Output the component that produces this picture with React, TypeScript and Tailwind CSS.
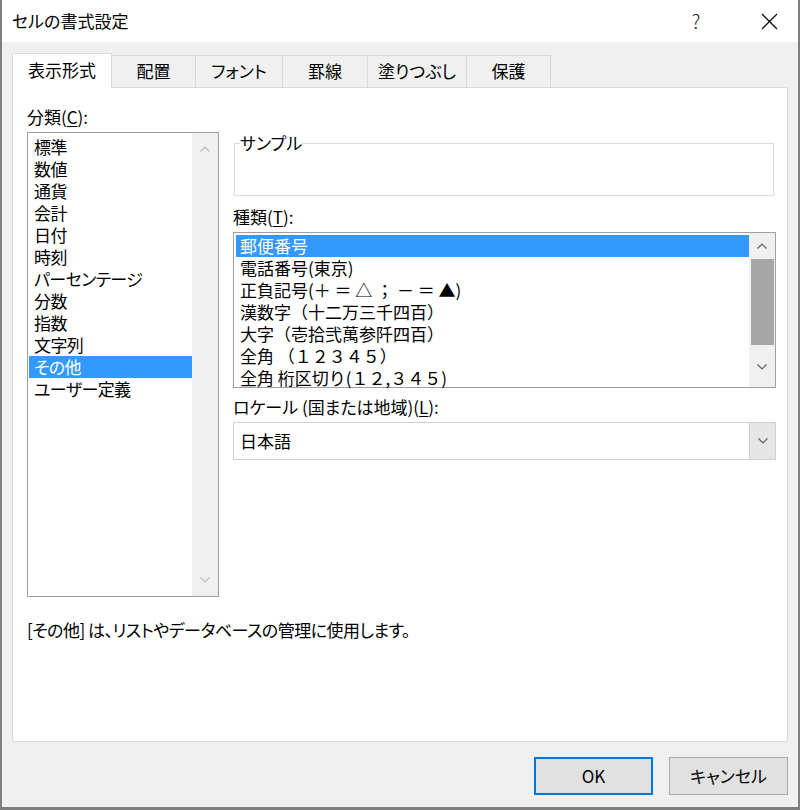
import React from "react";

const Up = ({ color }: { color: string }) => (
  <svg width="10" height="6" viewBox="0 0 10 6" fill="none">
    <polyline points="0.5,5.5 5,1 9.5,5.5" stroke={color} strokeWidth="1.2" />
  </svg>
);
const Down = ({ color }: { color: string }) => (
  <svg width="10" height="6" viewBox="0 0 10 6" fill="none">
    <polyline points="0.5,0.5 5,5 9.5,0.5" stroke={color} strokeWidth="1.2" />
  </svg>
);

const categories = [
  "標準",
  "数値",
  "通貨",
  "会計",
  "日付",
  "時刻",
  "パーセンテージ",
  "分数",
  "指数",
  "文字列",
  "その他",
  "ユーザー定義",
];

const types = [
  "郵便番号",
  "電話番号(東京)",
  "正負記号(＋ ＝ △ ； － ＝ ▲)",
  "漢数字（十二万三千四百）",
  "大字（壱拾弐萬参阡四百）",
  "全角 （１２３４５）",
  "全角 桁区切り(１２,３４５)",
];

const tabs = [
  { label: "配置", w: "w-[84px]" },
  { label: "フォント", w: "w-[87px]" },
  { label: "罫線", w: "w-[85px]" },
  { label: "塗りつぶし", w: "w-[99px]" },
  { label: "保護", w: "w-[84px]" },
];

export default function App() {
  return (
    <div className="w-[800px] h-[810px] bg-[#5a5a5a] font-['Noto_Sans_CJK_JP',sans-serif] text-[17px] leading-[22px] text-black [font-feature-settings:'palt']">
      <div className="w-[800px] h-[810px] flex flex-col border-x-2 border-b-[3px] border-[#7e7e7e] bg-[#f0f0f0]">
        {/* title bar */}
        <div className="h-[42px] bg-white flex items-center pl-[10px] shrink-0">
          <div className="text-[17px]">セルの書式設定</div>
          <div className="ml-auto w-[30px] text-center text-[19px] font-light mr-[50px] text-[#111]">?</div>
          <div className="mr-[20px] flex items-center">
            <svg width="17" height="17" viewBox="0 0 17 17">
              <line x1="1" y1="1" x2="16" y2="16" stroke="#111" strokeWidth="1.3" />
              <line x1="16" y1="1" x2="1" y2="16" stroke="#111" strokeWidth="1.3" />
            </svg>
          </div>
        </div>

        {/* body */}
        <div className="flex-1 flex flex-col pt-[11px] pl-[10px] pr-[10px]">
          {/* tabs */}
          <div className="flex items-end h-[34px]">
            <div className="relative z-10 w-[100px] h-[35px] mb-[-1px] bg-white border-x border-t border-[#d9d9d9] flex items-center justify-center pb-[3px]">
              表示形式
            </div>
            {tabs.map((t) => (
              <div
                key={t.label}
                className={`${t.w} h-[32px] bg-[#f0f0f0] border-t border-r border-[#d9d9d9] flex items-center justify-center pb-[1px]`}
              >
                {t.label}
              </div>
            ))}
          </div>

          {/* panel */}
          <div className="h-[655px] bg-white border border-[#d9d9d9] pt-[18px] pl-[14px] flex flex-col">
            <div className="flex">
              {/* left column */}
              <div className="w-[192px] flex flex-col">
                <div className="h-[22px]">
                  分類(<span className="underline underline-offset-2">C</span>):
                </div>
                <div className="mt-[4px] h-[465px] border border-[#a0a0a0] flex">
                  <div className="flex-1 pt-[3px] pl-[1px]">
                    {categories.map((c) => (
                      <div
                        key={c}
                        className={`h-[22px] pl-[5px] tracking-[-0.6px] ${c === "その他" ? "bg-[#3399ff] text-white" : ""}`}
                      >
                        {c}
                      </div>
                    ))}
                  </div>
                  <div className="w-[26px] bg-[#f0f0f0] flex flex-col items-center justify-between pt-[13px] pb-[13px]">
                    <Up color="#bdbdbd" />
                    <Down color="#bdbdbd" />
                  </div>
                </div>
              </div>

              {/* right column */}
              <div className="ml-[14px] w-[543px] flex flex-col">
                <fieldset className="mt-[26px] ml-[1px] w-[540px] h-[64px] border border-[#dcdcdc] px-[5px]">
                  <legend className="px-0 leading-[22px]">サンプル</legend>
                </fieldset>
                <div className="mt-[10px] h-[22px]">
                  種類(<span className="underline underline-offset-2">T</span>):
                </div>
                <div className="mt-[4px] h-[156px] border border-[#a0a0a0] flex">
                  <div className="flex-1 pt-[2px] pl-[2px]">
                    {types.map((t, i) => (
                      <div
                        key={t}
                        className={`h-[22px] pl-[4px] whitespace-pre [font-feature-settings:normal] ${i === 0 ? "bg-[#3399ff] text-white" : ""}`}
                      >
                        {t}
                      </div>
                    ))}
                  </div>
                  <div className="w-[26px] bg-[#f0f0f0] flex flex-col items-center">
                    <div className="h-[26px] flex items-center justify-center">
                      <Up color="#606060" />
                    </div>
                    <div className="w-[23px] h-[86px] bg-[#a6a6a6]" />
                    <div className="flex-1 flex items-center justify-center pt-[2px]">
                      <Down color="#606060" />
                    </div>
                  </div>
                </div>
                <div className="mt-[8px] h-[22px]">
                  ロケール (国または地域)(<span className="underline underline-offset-2">L</span>):
                </div>
                <div className="mt-[4px] h-[38px] border border-[#cfcfcf] flex items-center">
                  <div className="flex-1 pl-[6px]">日本語</div>
                  <div className="w-[26px] h-[36px] bg-[#e6e6e6] border-l border-[#cccccc] flex items-center justify-center">
                    <Down color="#606060" />
                  </div>
                </div>
              </div>
            </div>

            <div className="mt-[22px] whitespace-pre tracking-[-0.5px]">[その他] は、リストやデータベースの管理に使用します。</div>
          </div>

          {/* buttons */}
          <div className="flex justify-end pt-[15px] gap-[16px]">
            <button className="w-[119px] h-[38px] bg-[#e1e1e1] border-2 border-[#0078d7] flex items-center justify-center">
              OK
            </button>
            <button className="w-[119px] h-[38px] bg-[#e1e1e1] border border-[#adadad] flex items-center justify-center">
              キャンセル
            </button>
          </div>
        </div>
      </div>
    </div>
  );
}
